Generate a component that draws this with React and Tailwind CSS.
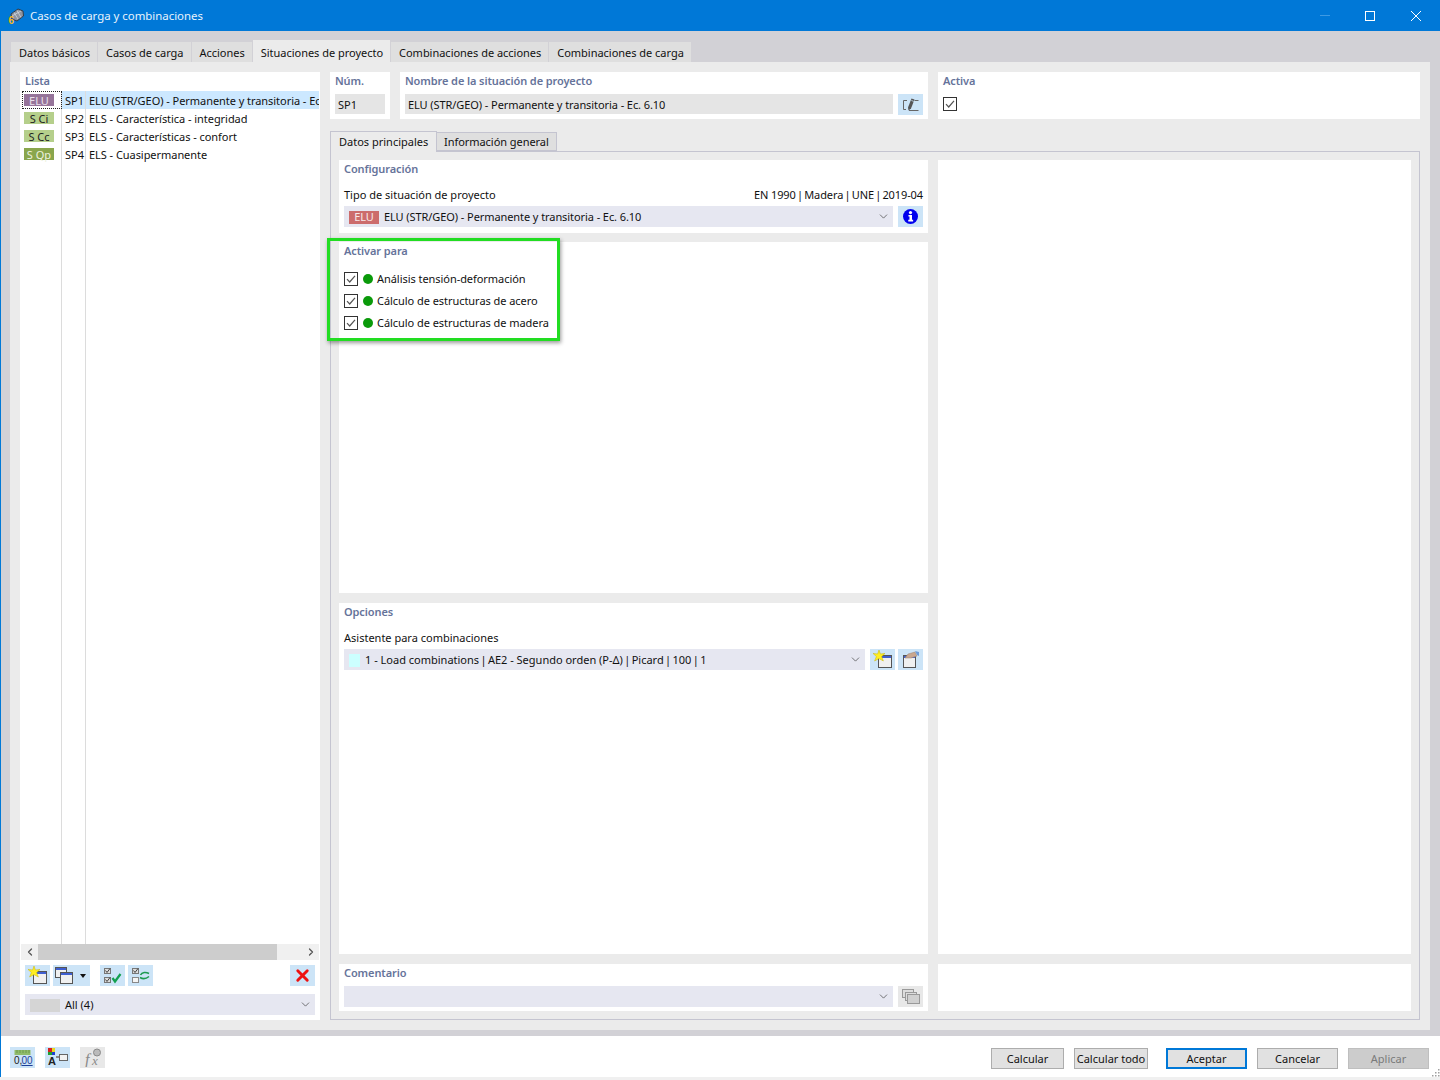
import { ChevronDown, ChevronLeft, ChevronRight, X } from "lucide-react";

const listRows = [
  { tag: "ELU", tagClass: "bg-[#96749a] text-[#e8e0ea]", id: "SP1", name: "ELU (STR/GEO) - Permanente y transitoria - Ec. 6.10", selected: true },
  { tag: "S Ci", tagClass: "bg-[#b5cf8b] text-[#222]", id: "SP2", name: "ELS - Característica - integridad" },
  { tag: "S Cc", tagClass: "bg-[#b5cf8b] text-[#222]", id: "SP3", name: "ELS - Características - confort" },
  { tag: "S Qp", tagClass: "bg-[#8aa64c] text-[#eef3e0]", id: "SP4", name: "ELS - Cuasipermanente" },
];

const mainTabs = ["Datos básicos", "Casos de carga", "Acciones", "Situaciones de proyecto", "Combinaciones de acciones", "Combinaciones de carga"];
const activations = ["Análisis tensión-deformación", "Cálculo de estructuras de acero", "Cálculo de estructuras de madera"];

const Label = ({ children, className = "" }) => (
  <div className={`text-[11px] leading-[18px] font-semibold tracking-[-0.1px] text-[#66739a] ${className}`}>{children}</div>
);

// the pipes of the font are wider than in the picture
const Piped = ({ text, className = "" }) => (
  <span className={className}>
    {text.split(" | ").map((part, i) => (
      <span key={part}>
        {i > 0 && <span className="mx-[-1.5px]"> | </span>}
        {part}
      </span>
    ))}
  </span>
);

const IconButton = ({ children, className = "" }) => (
  <div className={`h-[21px] w-[25px] shrink-0 bg-[#cce4f7] flex items-center justify-center ${className}`}>{children}</div>
);

const CheckBox = () => (
  <svg width="14" height="14" viewBox="0 0 14 14" className="shrink-0">
    <rect x="0.5" y="0.5" width="13" height="13" fill="#fff" stroke="#333" />
    <path d="M3 7.2 L5.7 10 L11 3.8" fill="none" stroke="#555" strokeWidth="1.2" />
  </svg>
);

const WindowIcon = ({ x = 0, y = 0, w = 14, h = 13, grey }) => (
  <g>
    <rect x={x + 0.5} y={y + 0.5} width={w} height={h} fill={grey ? "#e4e4e4" : "#f0f0f0"} stroke={grey ? "#999" : "#555"} />
    <rect x={x + 1} y={y + 1} width={w - 1} height="2" fill={grey ? "#aaa" : "#3f5fd0"} />
  </g>
);

const Star = ({ cx = 6, cy = 6 }) => (
  <path
    transform={`translate(${cx - 6} ${cy - 6})`}
    d="M6 0 L7.4 4 L12 3.4 L8.6 6.6 L10.4 11 L6 8.6 L1.6 11 L3.4 6.6 L0 3.4 L4.6 4 Z"
    fill="#ffee22"
    stroke="#c9b400"
    strokeWidth="0.5"
  />
);

const NewIcon = () => (
  <svg width="21" height="19" viewBox="0 0 21 19">
    <WindowIcon x={6} y={5} w={13} h={12} />
    <Star cx={7} cy={6} />
  </svg>
);

const CopyIcon = () => (
  <svg width="18" height="19" viewBox="0 0 18 19">
    <WindowIcon x={0} y={1} w={11} h={10} />
    <WindowIcon x={5} y={6} w={12} h={11} />
  </svg>
);

const CheckAllIcon = () => (
  <svg width="20" height="19" viewBox="0 0 20 19">
    <rect x="1.5" y="2.5" width="6" height="5" fill="#ddd" stroke="#777" />
    <rect x="1.5" y="11.5" width="6" height="5" fill="#ddd" stroke="#777" />
    <path d="M2.5 4.5 L4 6.5 L7 2.5 M2.5 13.5 L4 15.5 L7 11.5" fill="none" stroke="#444" />
    <path d="M9.5 12 L12 15.5 L17.5 8" fill="none" stroke="#12a050" strokeWidth="2.2" />
  </svg>
);

const SwapIcon = () => (
  <svg width="20" height="19" viewBox="0 0 20 19">
    <rect x="1.5" y="2.5" width="6" height="5" fill="#ddd" stroke="#777" />
    <rect x="1.5" y="11.5" width="6" height="5" fill="#f4f4f4" stroke="#888" />
    <path d="M2.5 4.5 L4 6.5 L7 2.5" fill="none" stroke="#444" />
    <path d="M9.5 9 C11 6 15 6 18 7.5 M18 10.5 C15 13 11.5 13 9 11.5" fill="none" stroke="#1d9a50" strokeWidth="1.6" />
  </svg>
);

const EditIcon = () => (
  <svg width="16" height="14" viewBox="0 0 16 14">
    <path d="M4 2.5 H0.5 V11.5 H3 M6 12.5 H15.5 M11.5 2.5 H15.5" fill="none" stroke="#666" />
    <path d="M8.5 0.5 L11.5 1.5 L8 10.5 L5.5 12.5 L5 9.5 Z" fill="#555" />
    <path d="M8.4 2.5 L10.8 3.4" stroke="#cce4f7" strokeWidth="0.8" />
  </svg>
);

const InfoIcon = () => (
  <svg width="15" height="15" viewBox="0 0 16 16">
    <circle cx="8" cy="8" r="8" fill="#0000ee" />
    <circle cx="8" cy="3.8" r="1.7" fill="#fff" />
    <path d="M5.8 6.3 H9.6 V11.4 H10.8 V13.2 H5.6 V11.4 H6.9 V8 H5.8 Z" fill="#fff" />
  </svg>
);

const WizardIcon = () => (
  <svg width="21" height="19" viewBox="0 0 21 19">
    <WindowIcon x={3} y={5} w={12} h={12} />
    <path d="M5 8 L8 4 L15 2 L17 6 L11 8 Z" fill="#c9a78f" stroke="#9a8272" strokeWidth="0.5" />
    <path d="M15 1 L19 2 L19 6 L17 5 Z" fill="#6d9bd8" />
  </svg>
);

const CommentIcon = () => (
  <svg width="18" height="15" viewBox="0 0 18 15">
    <rect x="0.5" y="0.5" width="11" height="8" fill="#ddd" stroke="#999" />
    <rect x="3.5" y="3.5" width="11" height="8" fill="#ddd" stroke="#999" />
    <rect x="5.5" y="5.5" width="12" height="9" fill="#d0d0d0" stroke="#999" />
  </svg>
);

const UnitsIcon = () => (
  <svg width="22" height="19" viewBox="0 0 22 19">
    <rect x="2.5" y="2" width="16" height="5" fill="#8fbb6a" />
    <path d="M5 2 V5 M8 2 V5 M11 2 V5 M14 2 V5 M17 2 V5" stroke="#6d9a4c" />
    <text x="2" y="16" fontSize="10" fontFamily="Liberation Sans" fill="#222">0,</text>
    <text x="9.5" y="16" fontSize="10" fontFamily="Liberation Sans" fill="#1d3f99" textDecoration="underline">00</text>
  </svg>
);

const ColorsIcon = () => (
  <svg width="22" height="19" viewBox="0 0 22 19">
    <rect x="1" y="0" width="4" height="4" fill="#d82020" />
    <rect x="5" y="0" width="3" height="4" fill="#e8d820" />
    <rect x="1" y="4" width="4" height="3" fill="#20a030" />
    <rect x="5" y="4" width="3" height="3" fill="#2040d0" />
    <text x="1" y="17" fontSize="11" fontWeight="700" fontFamily="Liberation Sans" fill="#222">A</text>
    <rect x="12.5" y="6.5" width="8" height="6" fill="#f2f2f2" stroke="#666" />
    <rect x="9" y="8" width="3" height="2" fill="#888" />
  </svg>
);

const FormulaIcon = () => (
  <svg width="22" height="19" viewBox="0 0 22 19">
    <text x="3" y="17" fontSize="16" fontStyle="italic" fontFamily="Liberation Serif" fill="#8a8a8a">f</text>
    <text x="10" y="17" fontSize="13" fontStyle="italic" fontFamily="Liberation Serif" fill="#8a8a8a">x</text>
    <circle cx="15" cy="4.5" r="3.5" fill="#bbb" stroke="#8a8a8a" />
  </svg>
);

const AppIcon = () => (
  <svg width="16" height="16" viewBox="0 0 16 16">
    <path d="M3 6 L10 1 L15 3 L15.5 8 L9 13 L4 11 Z" fill="#8e94a0" stroke="#2f333b" strokeWidth="0.9" />
    <path d="M6 4.5 L10 11 M9 2.5 L13 9.5 M4 8 L13 3" stroke="#d8dce2" strokeWidth="0.7" fill="none" />
    <text x="0.5" y="15.5" fontSize="10" fontWeight="700" fontFamily="Liberation Sans" fill="#f5b820">6</text>
  </svg>
);

const BottomButton = ({ children, className = "" }) => (
  <div className={`h-[21px] pt-[1px] flex items-center justify-center text-[11px] ${className}`}>{children}</div>
);

const Dropdown = ({ children, className = "" }) => (
  <div className={`h-[21px] bg-[#e6e7f1] flex items-center text-[11px] text-[#111] ${className}`}>
    <div className="flex-1 flex items-center min-w-0 pt-[1px] whitespace-pre">{children}</div>
    <ChevronDown size={13} strokeWidth={1.2} className="text-[#333] mr-[3px]" />
  </div>
);

const ListPanel = () => (
  <div className="w-[300px] bg-white flex flex-col shrink-0">
    <Label className="pl-[5px]">Lista</Label>
    <div className="flex-1 flex flex-col text-[11px] text-[#111] min-h-0 pt-[1px]">
      {listRows.map((row) => (
        <div key={row.id} className="h-[18px] mr-[1px] flex shrink-0 leading-[20px]">
          <div className={`w-[40px] ml-[2px] shrink-0 pl-[2px] py-[3px] border-r border-[#dcdcdc] ${row.selected ? "outline-1 outline-dotted outline-[#222] -outline-offset-1" : ""}`}>
            <div className={`h-[12px] w-[30px] flex items-center justify-center text-[11px] leading-none ${row.tagClass}`}>{row.tag}</div>
          </div>
          <div className={`w-[24px] shrink-0 pl-[3px] border-r border-[#dcdcdc] overflow-hidden ${row.selected ? "bg-[#cce8ff]" : ""}`}>{row.id}</div>
          <div className={`flex-1 min-w-0 pl-[3px] whitespace-nowrap overflow-hidden tracking-[-0.05px] ${row.selected ? "bg-[#cce8ff]" : ""}`}>{row.name}</div>
        </div>
      ))}
      <div className="flex-1 flex">
        <div className="w-[40px] ml-[2px] border-r border-[#dcdcdc]" />
        <div className="w-[24px] border-r border-[#dcdcdc]" />
      </div>
    </div>
    <div className="h-[16px] mx-[1px] bg-[#f0f0f0] flex items-center shrink-0">
      <div className="w-[17px] flex justify-center"><ChevronLeft size={12} strokeWidth={2.5} className="text-[#555]" /></div>
      <div className="h-full w-[239px] bg-[#cdcdcd] mr-auto" />
      <div className="w-[17px] flex justify-center"><ChevronRight size={12} strokeWidth={2.5} className="text-[#555]" /></div>
    </div>
    <div className="flex items-center px-[5px] mt-[5px] shrink-0">
      <IconButton><NewIcon /></IconButton>
      <IconButton className="w-[37px] ml-[3px] justify-start pl-[2px] gap-[7px]">
        <CopyIcon />
        <svg width="6" height="4" viewBox="0 0 6 4"><path d="M0 0 H6 L3 4 Z" fill="#111" /></svg>
      </IconButton>
      <IconButton className="ml-[10px]"><CheckAllIcon /></IconButton>
      <IconButton className="ml-[3px]"><SwapIcon /></IconButton>
      <IconButton className="ml-auto"><X size={19} strokeWidth={3.6} className="text-[#ee1111]" /></IconButton>
    </div>
    <div className="px-[5px] mt-[8px] mb-[5px] shrink-0">
      <Dropdown className="pl-[5px]">
        <div className="w-[30px] h-[13px] bg-[#d5d5d5] mr-[5px]" />
        All (4)
      </Dropdown>
    </div>
  </div>
);

const HeaderRow = () => (
  <div className="flex gap-[10px] h-[47px] shrink-0">
    <div className="w-[60px] bg-white px-[5px]">
      <Label>Núm.</Label>
      <div className="h-[20px] mt-[4px] bg-[#e5e5e5] pl-[3px] text-[11px] leading-[22px] text-[#111]">SP1</div>
    </div>
    <div className="w-[528px] bg-white px-[5px]">
      <Label>Nombre de la situación de proyecto</Label>
      <div className="flex mt-[4px] gap-[5px]">
        <div className="flex-1 h-[20px] bg-[#e5e5e5] pl-[3px] text-[11px] leading-[22px] tracking-[-0.08px] text-[#111]">ELU (STR/GEO) - Permanente y transitoria - Ec. 6.10</div>
        <IconButton><EditIcon /></IconButton>
      </div>
    </div>
    <div className="flex-1 bg-white px-[5px]">
      <Label>Activa</Label>
      <div className="mt-[7px]"><CheckBox /></div>
    </div>
  </div>
);

const SectionTabs = () => (
  <div className="flex items-end h-[21px] mt-[11px] shrink-0 text-[11px] text-[#111]">
    <div className="h-[21px] w-[107px] pl-[8px] leading-[20px] bg-[#ebebeb] border border-b-0 border-[#c4c4d0] relative top-[1px] z-10">Datos principales</div>
    <div className="h-[19px] w-[120px] pl-[7px] leading-[17px] tracking-[-0.05px] bg-[#dfdfdf] border border-l-0 border-[#c4c4d0]">Información general</div>
  </div>
);

const ConfigSection = () => (
  <section className="h-[73px] bg-white px-[5px] shrink-0">
    <Label>Configuración</Label>
    <div className="flex justify-between text-[11px] leading-[18px] mt-[8px] text-[#111]">
      <span>Tipo de situación de proyecto</span>
      <Piped text="EN 1990 | Madera | UNE | 2019-04" className="tracking-[-0.1px]" />
    </div>
    <div className="flex gap-[5px] mt-[2px]">
      <Dropdown className="flex-1 pl-[5px] tracking-[-0.08px]">
        <div className="w-[30px] h-[13px] bg-[#cc6c6c] text-[#f8e8e8] flex items-center justify-center mr-[5px]">ELU</div>
        ELU (STR/GEO) - Permanente y transitoria - Ec. 6.10
      </Dropdown>
      <IconButton><InfoIcon /></IconButton>
    </div>
  </section>
);

const ActivateSection = () => (
  <section className="h-[351px] bg-white px-[5px] mt-[9px] shrink-0 relative">
    <Label>Activar para</Label>
    <div className="mt-[12px] flex flex-col gap-[8px]">
      {activations.map((item) => (
        <div key={item} className="flex items-center h-[14px] text-[11px] tracking-[-0.05px] text-[#111]">
          <CheckBox />
          <span className="w-[10px] h-[10px] rounded-full bg-[#0a9a0a] ml-[5px] mr-[4px] shrink-0" />
          <span className="pt-[1px]">{item}</span>
        </div>
      ))}
    </div>
    {/* highlight frame over the section */}
    <div className="absolute left-[-12px] top-[-4px] w-[233px] h-[103px] border-[3px] border-[#22dd22] shadow-[1px_2px_4px_rgba(0,0,0,0.4)]" />
  </section>
);

const OptionsSection = () => (
  <section className="h-[351px] bg-white px-[5px] mt-[10px] shrink-0">
    <Label>Opciones</Label>
    <div className="text-[11px] leading-[18px] mt-[8px] text-[#111]">Asistente para combinaciones</div>
    <div className="flex mt-[2px]">
      <Dropdown className="flex-1 pl-[5px]">
        <div className="w-[11px] h-[13px] bg-[#ccffff] mr-[5px]" />
        <Piped text="1 - Load combinations | AE2 - Segundo orden (P-Δ) | Picard | 100 | 1" />
      </Dropdown>
      <IconButton className="ml-[5px]"><NewIcon /></IconButton>
      <IconButton className="ml-[3px]"><WizardIcon /></IconButton>
    </div>
  </section>
);

const CommentSection = () => (
  <section className="h-[47px] bg-white px-[5px] mt-[10px] shrink-0">
    <Label>Comentario</Label>
    <div className="flex gap-[5px] mt-[4px]">
      <Dropdown className="flex-1" />
      <div className="h-[21px] w-[25px] bg-[#e8e8e8] flex items-center justify-center"><CommentIcon /></div>
    </div>
  </section>
);

export default function App() {
  return (
    <div className="w-[1440px] h-[1080px] overflow-hidden flex flex-col bg-[#f0f0f0] font-['Noto_Sans',sans-serif]">
      {/* Title bar */}
      <div className="h-[31px] bg-[#0078d7] flex items-center shrink-0 text-white">
        <div className="ml-[8px] mr-[6px] flex"><AppIcon /></div>
        <span className="text-[11.4px] pt-[1px] text-[#e8f3fc]">Casos de carga y combinaciones</span>
        <div className="ml-auto flex items-center">
          <div className="w-[10px] h-[1px] bg-[#3d9ae4] mr-[35px]" />
          <div className="w-[10px] h-[10px] border border-white mr-[36px]" />
          <svg width="10" height="10" viewBox="0 0 10 10" className="mr-[19px]">
            <path d="M0 0 L10 10 M10 0 L0 10" stroke="#fff" strokeWidth="1" />
          </svg>
        </div>
      </div>

      <div className="h-[1046px] border-l border-[#0078d7] flex flex-col shrink-0">
        <div className="h-[1005px] bg-[#d2d1d6] flex flex-col pl-[9px] pr-[10px] shrink-0">
          {/* Main tabs */}
          <div className="h-[31px] pl-[1px] flex items-end shrink-0 text-[11px] tracking-[-0.02px] text-[#111]">
            {mainTabs.map((tab) => {
              const active = tab === "Situaciones de proyecto";
              return (
                <div
                  key={tab}
                  className={`pl-[8px] pr-[7px] mr-[1px] whitespace-nowrap ${active ? "h-[22px] leading-[26px] bg-[#ebebeb]" : "h-[20px] leading-[22px] bg-[#dfdfdf]"}`}
                >
                  {tab}
                </div>
              );
            })}
          </div>

          {/* Page */}
          <div className="h-[968px] bg-[#ebebeb] p-[10px] flex gap-[10px] shrink-0">
            <ListPanel />
            <div className="flex-1 flex flex-col min-w-0">
              <HeaderRow />
              <SectionTabs />
              <div className="flex-1 border border-[#c4c4d0] p-[8px] flex gap-[10px] min-h-0">
                <div className="w-[589px] flex flex-col shrink-0">
                  <ConfigSection />
                  <ActivateSection />
                  <OptionsSection />
                  <CommentSection />
                </div>
                <div className="flex-1 flex flex-col">
                  <div className="h-[794px] bg-white shrink-0" />
                  <div className="h-[47px] bg-white mt-[10px] shrink-0" />
                </div>
              </div>
            </div>
          </div>
        </div>

        {/* Bottom bar */}
        <div className="h-[41px] bg-white flex items-start pl-[9px] pr-[10px] shrink-0 relative">
          <IconButton className="mt-[11px]"><UnitsIcon /></IconButton>
          <IconButton className="mt-[11px] ml-[10px]"><ColorsIcon /></IconButton>
          <div className="mt-[11px] ml-[10px] h-[21px] w-[25px] bg-[#e8e8e8] flex items-center justify-center"><FormulaIcon /></div>
          <div className="ml-auto mr-[1px] flex items-center mt-[12px]">
            <BottomButton className="w-[73px] border border-[#adadad] bg-[#e1e1e1] text-[#111]">Calcular</BottomButton>
            <BottomButton className="w-[74px] ml-[10px] border border-[#adadad] bg-[#e1e1e1] text-[#111]">Calcular todo</BottomButton>
            <BottomButton className="w-[81px] ml-[18px] border-2 border-[#0078d7] bg-[#e1e1e1] text-[#111]">Aceptar</BottomButton>
            <BottomButton className="w-[81px] ml-[10px] border border-[#adadad] bg-[#e1e1e1] text-[#111]">Cancelar</BottomButton>
            <BottomButton className="w-[81px] ml-[10px] border border-[#bfbfbf] bg-[#cccccc] text-[#7a7a7a]">Aplicar</BottomButton>
          </div>
          <svg width="10" height="10" viewBox="0 0 10 10" className="absolute right-0 bottom-0">
            <path d="M8 2h1.5v1.5H8zM5 5h1.5v1.5H5zM8 5h1.5v1.5H8zM2 8h1.5v1.5H2zM5 8h1.5v1.5H5zM8 8h1.5v1.5H8z" fill="#a0a0a0" />
          </svg>
        </div>
      </div>
    </div>
  );
}
